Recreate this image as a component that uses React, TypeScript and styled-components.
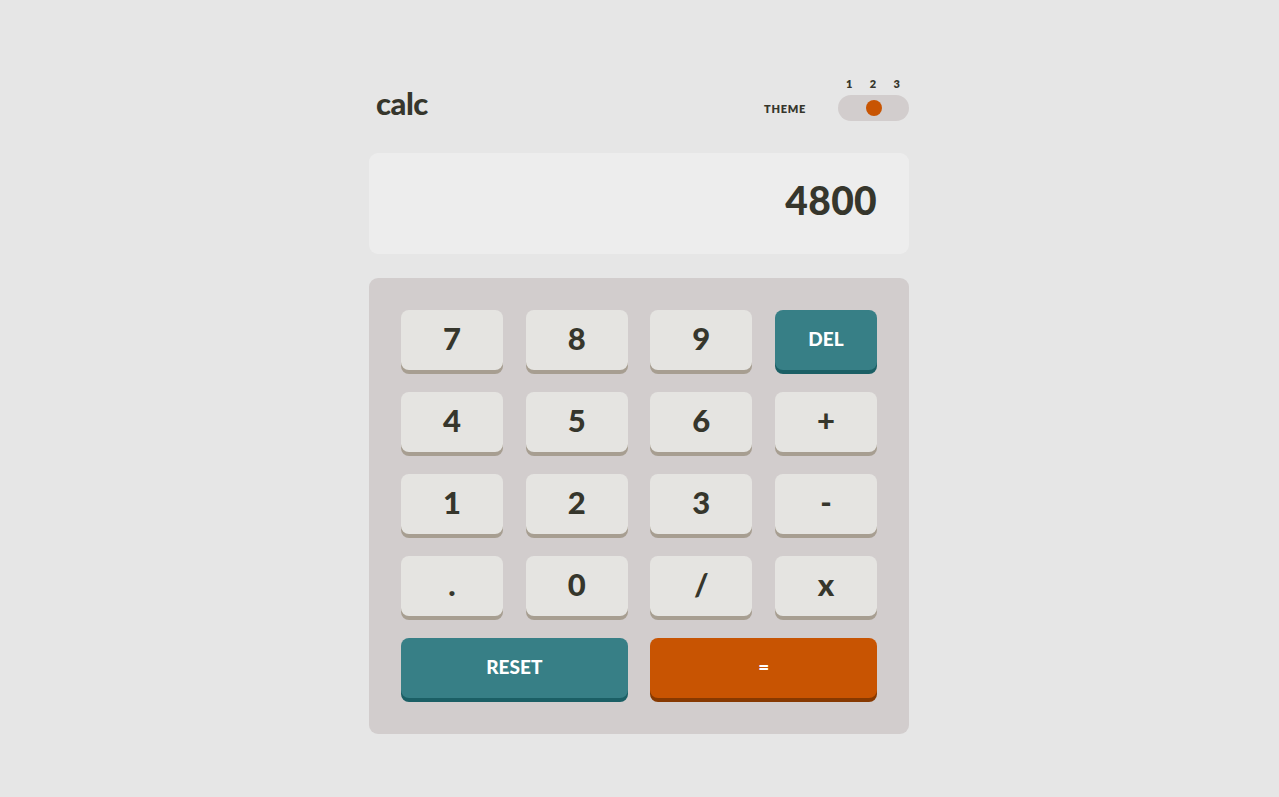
import React from "react";
import styled, { createGlobalStyle } from "styled-components";

const Global = createGlobalStyle`
  html, body { margin: 0; padding: 0; background: #e6e6e6; }
  body { font-family: "Lato", "Open Sans", sans-serif; color: #36362c; }
  * { box-sizing: border-box; }
`;

const Page = styled.main`
  min-height: 797px;
  display: flex;
  justify-content: center;
  padding-top: 75px;
  padding-right: 1px;
`;

const Calculator = styled.div`
  width: 540px;
  display: flex;
  flex-direction: column;
`;

const Header = styled.header`
  display: flex;
  justify-content: space-between;
  align-items: flex-end;
  padding-left: 7px;
  height: 46px;
`;

const Logo = styled.h1`
  margin: 0;
  font-size: 31px;
  font-weight: 900;
  letter-spacing: -0.5px;
  line-height: 30px;
  padding-bottom: 3px;
  color: #36362c;
`;

const ThemeGroup = styled.div`
  display: flex;
  align-items: flex-end;
  gap: 32px;
`;

const ThemeLabel = styled.span`
  font-size: 11px;
  font-weight: 800;
  letter-spacing: 0.7px;
  line-height: 24px;
  height: 24px;
  color: #36362c;
`;

const Switcher = styled.div`
  display: flex;
  flex-direction: column;
  width: 71px;
  gap: 5px;
`;

const Numbers = styled.div`
  display: flex;
  justify-content: space-between;
  padding: 0 9px 0 8px;
  font-size: 11px;
  font-weight: 800;
  line-height: 12px;
  color: #36362c;
`;

const Track = styled.div`
  height: 26px;
  border-radius: 13px;
  background: #d2cdcd;
  display: flex;
  align-items: center;
  justify-content: center;
  padding: 0 5px;
`;

const Dot = styled.span`
  width: 16px;
  height: 16px;
  border-radius: 50%;
  background: #c85402;
`;

const Screen = styled.div`
  margin-top: 32px;
  height: 101px;
  border-radius: 9px;
  background: #ededed;
  display: flex;
  align-items: center;
  justify-content: flex-end;
  padding: 0 32px 8px;
  font-size: 39px;
  font-weight: 900;
  color: #36362c;
  letter-spacing: 0.3px;
`;

const Keypad = styled.div`
  margin-top: 24px;
  border-radius: 9px;
  background: #d2cdcd;
  padding: 32px;
  display: grid;
  grid-template-columns: repeat(4, 1fr);
  column-gap: 22.67px;
  row-gap: 18px;
`;

type Variant = "num" | "del" | "eq";

const palette: Record<Variant, { bg: string; shadow: string; color: string; size: string }> = {
  num: { bg: "#e5e4e1", shadow: "#a79e91", color: "#36362c", size: "31px" },
  del: { bg: "#377f86", shadow: "#1b5f65", color: "#ffffff", size: "19px" },
  eq: { bg: "#c85402", shadow: "#873901", color: "#ffffff", size: "19px" },
};

const Key = styled.button<{ $variant: Variant; $wide?: boolean }>`
  grid-column: ${(p) => (p.$wide ? "span 2" : "auto")};
  height: 60px;
  margin-bottom: 4px;
  border: none;
  border-radius: 8px;
  background: ${(p) => palette[p.$variant].bg};
  box-shadow: 0 4px 0 ${(p) => palette[p.$variant].shadow};
  color: ${(p) => palette[p.$variant].color};
  font-family: "Lato", "Open Sans", sans-serif;
  font-size: ${(p) => palette[p.$variant].size};
  font-weight: 900;
  display: flex;
  align-items: center;
  justify-content: center;
  padding: 0 0 ${(p) => (p.$variant === "num" ? "5px" : "3px")};
  cursor: pointer;
`;

const keys: { label: string; variant: Variant; wide?: boolean }[] = [
  { label: "7", variant: "num" },
  { label: "8", variant: "num" },
  { label: "9", variant: "num" },
  { label: "DEL", variant: "del" },
  { label: "4", variant: "num" },
  { label: "5", variant: "num" },
  { label: "6", variant: "num" },
  { label: "+", variant: "num" },
  { label: "1", variant: "num" },
  { label: "2", variant: "num" },
  { label: "3", variant: "num" },
  { label: "-", variant: "num" },
  { label: ".", variant: "num" },
  { label: "0", variant: "num" },
  { label: "/", variant: "num" },
  { label: "x", variant: "num" },
  { label: "RESET", variant: "del", wide: true },
  { label: "=", variant: "eq", wide: true },
];

export default function App() {
  return (
    <>
      <Global />
      <Page>
        <Calculator>
          <Header>
            <Logo>calc</Logo>
            <ThemeGroup>
              <ThemeLabel>THEME</ThemeLabel>
              <Switcher>
                <Numbers>
                  <span>1</span>
                  <span>2</span>
                  <span>3</span>
                </Numbers>
                <Track>
                  <Dot />
                </Track>
              </Switcher>
            </ThemeGroup>
          </Header>
          <Screen>4800</Screen>
          <Keypad>
            {keys.map((k) => (
              <Key key={k.label} $variant={k.variant} $wide={k.wide}>
                {k.label}
              </Key>
            ))}
          </Keypad>
        </Calculator>
      </Page>
    </>
  );
}
